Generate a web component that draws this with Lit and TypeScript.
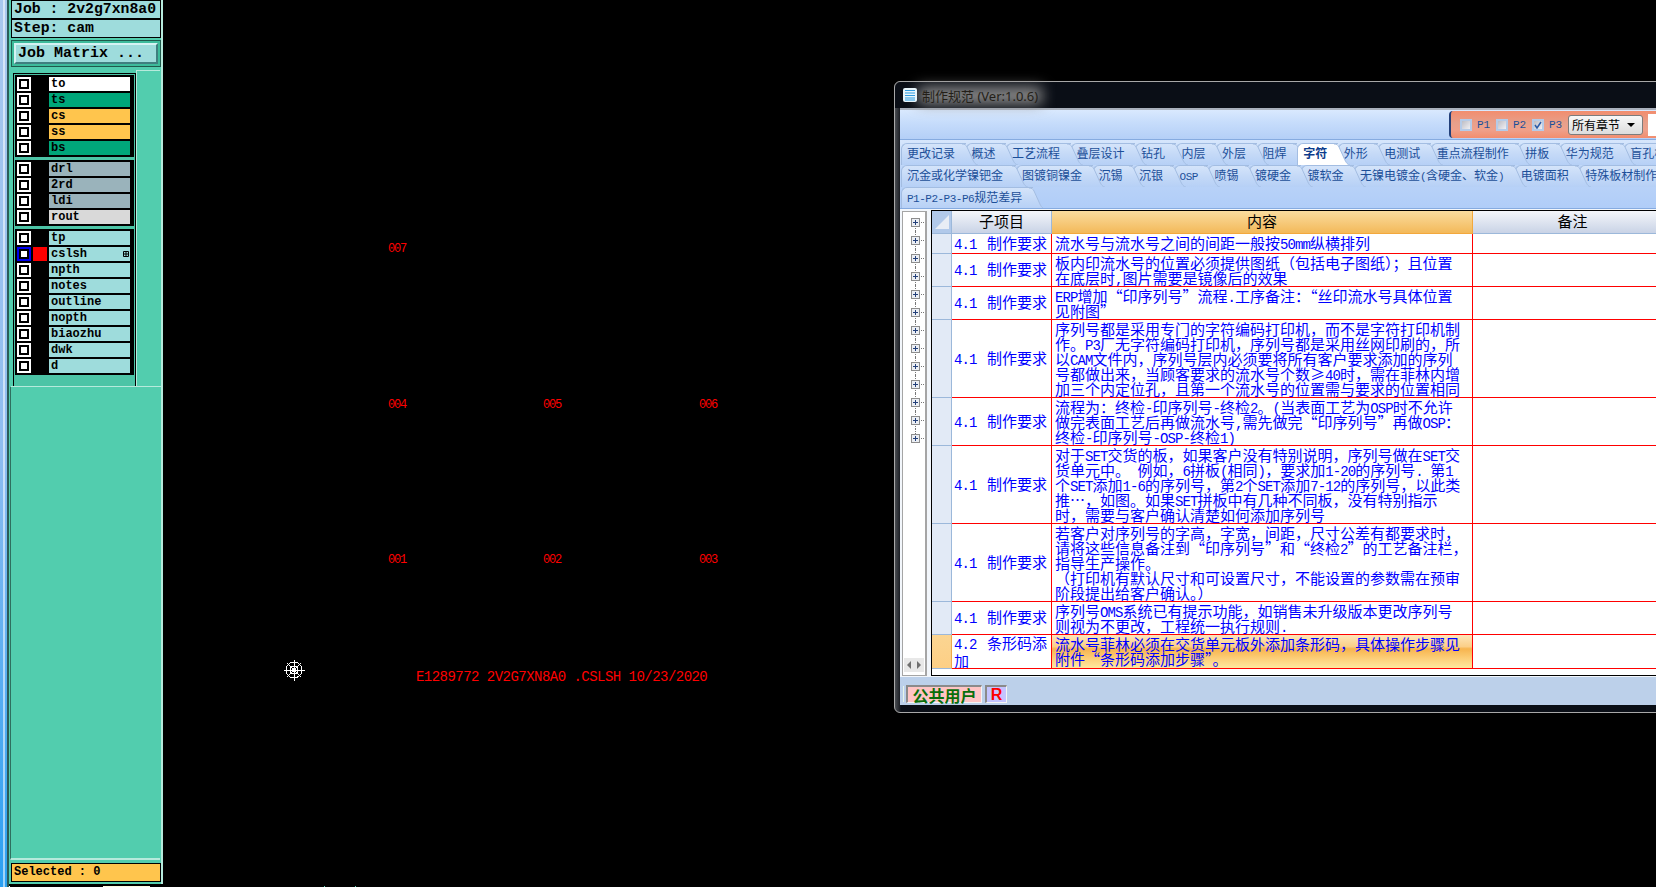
import { LitElement, css, html, svg } from "lit";
import { customElement } from "lit/decorators.js";
import { classMap } from "lit/directives/class-map.js";

interface Layer {
    name: string;
    tone: string;
    check?: boolean;
    mark?: boolean;
}

const LAYER_GROUPS: Layer[][] = [
    [
        { name: "to", tone: "white" },
        { name: "ts", tone: "green" },
        { name: "cs", tone: "orange" },
        { name: "ss", tone: "orange" },
        { name: "bs", tone: "green" },
    ],
    [
        { name: "drl", tone: "slate" },
        { name: "2rd", tone: "slate" },
        { name: "ldi", tone: "slate" },
        { name: "rout", tone: "grey" },
    ],
    [
        { name: "tp", tone: "cyan" },
        { name: "cslsh", tone: "cyan", check: true, mark: true },
        { name: "npth", tone: "cyan" },
        { name: "notes", tone: "cyan" },
        { name: "outline", tone: "cyan" },
        { name: "nopth", tone: "cyan" },
        { name: "biaozhu", tone: "cyan" },
        { name: "dwk", tone: "cyan" },
        { name: "d", tone: "cyan" },
    ],
];

const CANVAS_LABELS = [
    { text: "007", x: 225, y: 243 },
    { text: "004", x: 225, y: 399 },
    { text: "005", x: 380, y: 399 },
    { text: "006", x: 536, y: 399 },
    { text: "001", x: 225, y: 554 },
    { text: "002", x: 380, y: 554 },
    { text: "003", x: 536, y: 554 },
];

const TAB_ROWS: string[][] = [
    ["更改记录", "概述", "工艺流程", "叠层设计", "钻孔", "内层", "外层", "阻焊", "字符", "外形", "电测试", "重点流程制作", "拼板", "华为规范", "盲孔板"],
    ["沉金或化学镍钯金", "图镀铜镍金", "沉锡", "沉银", "OSP", "喷锡", "镀硬金", "镀软金", "无镍电镀金(含硬金、软金)", "电镀面积", "特殊板材制作"],
    ["P1-P2-P3-P6规范差异"],
];

const RULES: { item: string[]; lines: string[]; picked?: boolean }[] = [
    { item: ["4.1 制作要求"], lines: ["流水号与流水号之间的间距一般按50mm纵横排列"] },
    { item: ["4.1 制作要求"], lines: ["板内印流水号的位置必须提供图纸（包括电子图纸）；且位置", "在底层时,图片需要是镜像后的效果"] },
    { item: ["4.1 制作要求"], lines: ["ERP增加“印序列号”流程.工序备注：“丝印流水号具体位置", "见附图”"] },
    {
        item: ["4.1 制作要求"],
        lines: [
            "序列号都是采用专门的字符编码打印机，而不是字符打印机制",
            "作。P3厂无字符编码打印机，序列号都是采用丝网印刷的，所",
            "以CAM文件内，序列号层内必须要将所有客户要求添加的序列",
            "号都做出来，当顾客要求的流水号个数≥40时，需在菲林内增",
            "加三个内定位孔，且第一个流水号的位置需与要求的位置相同",
        ],
    },
    {
        item: ["4.1 制作要求"],
        lines: [
            "流程为：终检-印序列号-终检2。(当表面工艺为OSP时不允许",
            "做完表面工艺后再做流水号,需先做完“印序列号”再做OSP：",
            "终检-印序列号-OSP-终检1)",
        ],
    },
    {
        item: ["4.1 制作要求"],
        lines: [
            "对于SET交货的板，如果客户没有特别说明，序列号做在SET交",
            "货单元中。 例如，6拼板(相同)，要求加1-20的序列号. 第1",
            "个SET添加1-6的序列号，第2个SET添加7-12的序列号，以此类",
            "推…，如图。如果SET拼板中有几种不同板，没有特别指示",
            "时，需要与客户确认清楚如何添加序列号",
        ],
    },
    {
        item: ["4.1 制作要求"],
        lines: [
            "若客户对序列号的字高，字宽，间距，尺寸公差有都要求时，",
            "请将这些信息备注到“印序列号”和“终检2”的工艺备注栏，",
            "指导生产操作。",
            "（打印机有默认尺寸和可设置尺寸，不能设置的参数需在预审",
            "阶段提出给客户确认。）",
        ],
    },
    { item: ["4.1 制作要求"], lines: ["序列号OMS系统已有提示功能，如销售未升级版本更改序列号", "则视为不更改，工程统一执行规则."] },
    { item: ["4.2 条形码添", "加"], lines: ["流水号菲林必须在交货单元板外添加条形码，具体操作步骤见", "附件“条形码添加步骤”。"], picked: true },
];

const TREE_NODES = 13;

/** Latin runs are half width in the old bitmap font, so they get their own size. */
function mixed(text: string) {
    return text.split(/([\x20-\x7e]+)/).map((part, i) => (i % 2 ? html`<span class="lat">${part}</span>` : part));
}

@customElement("app-root")
export class AppRoot extends LitElement {
    static styles = css`
        :host {
            display: block;
            position: relative;
            width: 100vw;
            height: 100vh;
            overflow: hidden;
            background: #000;
            font-family: "Liberation Mono", monospace;
        }
        .desk {
            display: flex;
            height: 100%;
        }

        /* left edge of the other window */
        .edge {
            width: 9px;
            flex-shrink: 0;
            background:
                linear-gradient(90deg, transparent 0 3px, rgba(255, 255, 255, 0.55) 3px 5px, transparent 5px 7px, #2b5c58 7px 9px),
                linear-gradient(180deg, #a9c8ee 0%, #8fbdf0 50%, #2ba0f2 100%);
        }

        /* layer panel */
        .side {
            width: 154px;
            height: 884px;
            flex-shrink: 0;
            box-sizing: border-box;
            display: flex;
            flex-direction: column;
            padding-left: 2px;
            background: #52cdae;
            border-right: 2px solid #b6eadc;
            font-weight: 700;
            color: #000;
        }
        .info {
            height: 19px;
            width: 150px;
            box-sizing: border-box;
            border: 1px solid #000;
            background: #9edcdc;
            font-size: 14.8px;
            line-height: 17px;
            padding-left: 2px;
            white-space: pre;
            overflow: hidden;
        }
        .matrix {
            margin-top: 2px;
            width: 150px;
            height: 27px;
            box-sizing: border-box;
            border: 1px solid #1f5a4c;
            background: #3dbb9b;
            padding: 2px;
        }
        .matrix div {
            height: 21px;
            width: 144px;
            box-sizing: border-box;
            border: 2px solid;
            border-color: #d5f3f3 #3f7f7f #3f7f7f #d5f3f3;
            background: #9edcdc;
            font-size: 15px;
            line-height: 17px;
            padding-left: 2px;
            white-space: pre;
        }
        .mid {
            display: flex;
            margin-top: 3px;
            height: 317px;
            box-sizing: border-box;
            border-bottom: 1px solid #b6eadc;
        }
        .frame {
            width: 123px;
            height: 313px;
            margin: 3px 0 0 2px;
            box-sizing: border-box;
            border: 1px solid #000;
            border-bottom: 0;
            background: #4cc4a6;
            display: flex;
            flex-direction: column;
            gap: 3px;
            padding: 1px;
        }
        .mid-fill {
            flex: 1;
            border-left: 1px solid #b6eadc;
            border-top: 1px solid #b6eadc;
            margin-right: 1px;
        }
        .group {
            background: #000;
            padding: 2px 2px 0;
            display: flex;
            flex-direction: column;
        }
        .layer {
            display: flex;
            height: 16px;
        }
        .check {
            width: 14px;
            height: 14px;
            box-sizing: border-box;
            border: 2px solid #fff;
            background: #000;
            padding: 2px;
        }
        .check::before {
            content: "";
            display: block;
            width: 6px;
            height: 6px;
            background: #fff;
        }
        .check.on {
            border-color: #0000f0;
        }
        .swatch {
            width: 14px;
            height: 14px;
            margin: 0 2px;
        }
        .swatch.on {
            background: #f00;
        }
        .name {
            width: 81px;
            height: 14px;
            box-sizing: border-box;
            padding-left: 2px;
            font-size: 12px;
            line-height: 14px;
            display: flex;
            justify-content: space-between;
            align-items: center;
        }
        .name svg {
            margin-right: 1px;
        }
        .white {
            background: #fff;
        }
        .green {
            background: #00a67a;
        }
        .orange {
            background: #ffc54d;
        }
        .slate {
            background: #9ab3bb;
        }
        .grey {
            background: #d9d9d9;
        }
        .cyan {
            background: #9edcdc;
        }
        .rest {
            flex: 1;
            margin-left: -1px;
            margin-right: 1px;
            border-left: 1px solid #2f6f5f;
            border-bottom: 2px solid #b6eadc;
        }
        .selected {
            margin-top: 3px;
            margin-bottom: 2px;
            width: 150px;
            height: 19px;
            box-sizing: border-box;
            border: 1px solid #000;
            background: #ffc54d;
            font-size: 12px;
            line-height: 17px;
            padding-left: 2px;
            white-space: pre;
        }

        /* board canvas */
        .canvas {
            flex: 1;
            position: relative;
            color: #f00;
        }
        .label {
            position: absolute;
            font-size: 12px;
            line-height: 12px;
            letter-spacing: -1.2px;
        }
        .stamp {
            position: absolute;
            left: 253px;
            top: 669px;
            font-size: 14px;
            line-height: 16px;
            letter-spacing: -0.53px;
            white-space: pre;
        }
        .datum {
            position: absolute;
            left: 119px;
            top: 658px;
        }
        .crumb {
            position: absolute;
            top: 886px;
            height: 1px;
        }

        /* spec window */
        .win {
            position: absolute;
            left: 894px;
            top: 81px;
            width: 800px;
            height: 632px;
            box-sizing: border-box;
            display: flex;
            flex-direction: column;
            border: 1px solid #a8a8a8;
            border-radius: 6px 0 0 6px;
            background: linear-gradient(90deg, #4a4d52 0, #25282e 4px, #0a0e16 6px);
            font-family: "Noto Sans CJK SC", sans-serif;
        }
        .title {
            height: 26px;
            flex-shrink: 0;
            display: flex;
            align-items: center;
            gap: 5px;
            padding-left: 8px;
            background: #0a0e16;
            border-radius: 6px 0 0 0;
            font: 13px "Noto Sans", "Noto Sans CJK SC", sans-serif;
            color: #241f18;
            isolation: isolate;
        }
        .title span {
            position: relative;
        }
        .title span::before {
            content: "";
            position: absolute;
            inset: 1px -4px;
            z-index: -1;
            background: #8e8e8e;
            filter: blur(7px);
        }
        .client {
            flex: 1;
            min-height: 0;
            margin-left: 5px;
            margin-bottom: 7px;
            border-top: 2px solid #a9b0bc;
            display: flex;
            flex-direction: column;
            background: #f2f6fb;
        }
        .bar {
            height: 29px;
            flex-shrink: 0;
            box-sizing: content-box;
            display: flex;
            align-items: flex-start;
            background: linear-gradient(180deg, #d9e9fe 0%, #c6dcfb 45%, #b4cff7 100%);
            border-bottom: 1px solid #86abe0;
        }
        .filter {
            margin: 1px 0 0 549px;
            width: 260px;
            flex-shrink: 0;
            height: 27px;
            box-sizing: border-box;
            display: flex;
            align-items: center;
            border-left: 2px solid #23407a;
            border-radius: 4px 0 0 4px;
            background: linear-gradient(180deg, #f28d6e 0%, #e7a08b 45%, #efa08a 70%, #f28d6e 100%);
            padding-left: 9px;
            font: 10px "Liberation Mono", monospace;
            color: #1c4f99;
        }
        .pick {
            width: 12px;
            height: 12px;
            flex-shrink: 0;
            box-sizing: border-box;
            border: 2px solid #b5cbe8;
            background: linear-gradient(135deg, #bdbdc4, #f0f0f4);
            margin-right: 5px;
            display: flex;
        }
        .pick + span {
            margin-right: 6px;
            font-size: 11px;
            width: 13px;
            flex-shrink: 0;
        }
        .combo {
            width: 75px;
            height: 20px;
            flex-shrink: 0;
            box-sizing: border-box;
            display: flex;
            justify-content: space-between;
            align-items: center;
            padding: 0 7px 0 3px;
            border: 1px solid #7c7c7c;
            border-radius: 3px;
            background: linear-gradient(180deg, #f8f8f8, #dcdcdc);
            font: 12px "Noto Sans CJK SC", sans-serif;
            color: #000;
            white-space: nowrap;
        }
        .combo i {
            border: 4px solid transparent;
            border-top: 4px solid #000;
            border-bottom: 0;
        }
        .find {
            width: 60px;
            height: 22px;
            margin-left: 5px;
            flex-shrink: 0;
            background: #fff;
        }
        .strip {
            height: 69px;
            flex-shrink: 0;
            box-sizing: border-box;
            padding: 3px 0 0 1px;
            background: linear-gradient(180deg, #d6e6fc 0%, #bfd6f8 40%, #b0cdf8 100%);
            border-bottom: 1px solid #86abe0;
            overflow: hidden;
        }
        .tabs {
            display: flex;
            height: 22px;
            white-space: nowrap;
        }
        .tab {
            position: relative;
            flex-shrink: 0;
            box-sizing: border-box;
            height: 22px;
            padding: 0 10.5px 0 5px;
            font-size: 12px;
            line-height: 18px;
            color: #1c4f99;
            background: linear-gradient(180deg, #d4e4fa 0%, #c4d9f7 50%, #b6d0f6 100%);
            border-left: 1px solid #a3bde2;
            border-top: 1px solid #a3bde2;
            border-top-left-radius: 6px;
        }
        .tabs.second .tab:first-child {
            padding-right: 13px;
        }
        .tab.on {
            background: #fff;
            font-weight: 700;
            color: #0c3c8c;
        }
        .tab svg {
            position: absolute;
            left: 100%;
            top: -1px;
            margin-left: -4px;
        }
        .tab .lat {
            font: 11px "Liberation Mono", monospace;
            letter-spacing: -0.5px;
        }
        .main {
            flex: 1;
            min-height: 0;
            display: flex;
            margin-top: 1px;
        }
        .tree {
            width: 25px;
            height: 465px;
            margin: 1px 0 0 2px;
            box-sizing: border-box;
            flex-shrink: 0;
            border: 1px solid #a5a5a5;
            border-right-width: 2px;
            background: #fff;
            display: flex;
            flex-direction: column;
            padding-top: 1px;
        }
        .node {
            position: relative;
            height: 18px;
            padding: 0 0 0 8px;
            display: flex;
            align-items: center;
            gap: 1px;
            flex-shrink: 0;
        }
        .node::before {
            content: "";
            position: absolute;
            left: 12px;
            top: 0;
            bottom: 0;
            border-left: 1px dotted #777;
        }
        .node:first-child::before {
            top: 9px;
        }
        .node:nth-child(13)::before {
            bottom: 9px;
        }
        .node svg {
            position: relative;
        }
        .node i {
            width: 3px;
            border-top: 1px dotted #777;
        }
        .tree-scroll {
            margin: auto 1px 3px;
            height: 14px;
            display: flex;
            justify-content: space-around;
            align-items: center;
            background: #e8e8e8;
        }
        .tree-scroll i {
            border: 4px solid transparent;
            border-left: 0;
            border-right: 4px solid #707070;
        }
        .tree-scroll i + i {
            border-right: 0;
            border-left: 4px solid #707070;
        }
        .grid {
            margin-left: 4px;
            flex: 1;
            height: 466px;
            box-sizing: border-box;
            border: 1px solid #000;
            border-right: 0;
            background: #fff;
            overflow: hidden;
        }
        .row {
            display: grid;
            grid-template-columns: 20px 100px 421px 200px;
        }
        .head {
            height: 23px;
            font-size: 15px;
            line-height: 20px;
            color: #000;
            text-align: center;
        }
        .head div {
            background: linear-gradient(180deg, #f4f6fa 0%, #c9d3e6 100%);
            border-bottom: 1px solid #9cb8da;
            border-right: 1px solid #9cb8da;
        }
        .head .corner {
            background: #b1c9ea;
            display: flex;
            align-items: center;
            justify-content: center;
        }
        .head .picked {
            background: linear-gradient(180deg, #fadc9e 0%, #f3b95a 100%);
            border-bottom-color: #f3a83c;
            border-right-color: #f3a83c;
        }
        .row-no {
            background: #e2eaf6;
            border-right: 1px solid #9cb8da;
            border-bottom: 1px solid #9cb8da;
        }
        .row-no.picked {
            background: linear-gradient(180deg, #fbd592, #fdcf85);
            border-right-color: #f0a848;
        }
        .cell {
            border-right: 1px solid #f00;
            border-bottom: 1px solid #f00;
            color: #0000ff;
            font-size: 15px;
            line-height: 15px;
            overflow: hidden;
        }
        .cell div {
            white-space: pre;
        }
        .cell .lat {
            font: 14px "Liberation Mono", monospace;
            letter-spacing: -0.9px;
        }
        .item {
            display: flex;
            flex-direction: column;
            justify-content: center;
            padding-left: 2px;
        }
        .item .lat {
            padding-right: 3px;
        }
        .body {
            padding: 1px 0 1px 3px;
        }
        .body div {
            height: 15px;
        }
        .row.first .body,
        .row.first .item {
            min-height: 20px;
            box-sizing: border-box;
        }
        .body.picked {
            background: linear-gradient(180deg, #fde6ba 0%, #fbcf88 35%, #f7b44e 42%, #fdd27e 75%, #fee89f 100%);
        }
        .note {
            border-bottom: 1px solid #f00;
        }
        .status {
            height: 28px;
            flex-shrink: 0;
            box-sizing: border-box;
            background: #bcd0ea;
            display: flex;
            align-items: flex-start;
            padding: 8px 0 0 4px;
        }
        .who,
        .role {
            height: 18px;
            box-sizing: border-box;
            border: 1px solid #f5f5f5;
            border-top: 2px solid #8a8a8a;
            border-left: 2px solid #8a8a8a;
            line-height: 16px;
            text-align: center;
        }
        .who {
            width: 76px;
            margin-left: 2px;
            background: #ffc4c4;
            color: #0a6e0a;
            font-size: 16px;
            font-weight: 700;
            box-shadow: -3px 0 0 -1px #bcd0ea, -4px 0 0 -1px #e8f5e8;
        }
        .role {
            width: 22px;
            margin-left: 3px;
            background: #c4c4ff;
            color: #f00;
            font: 700 16px "Liberation Sans", sans-serif;
            line-height: 15px;
        }
    `;

    private renderLayer(layer: Layer) {
        return html`
            <div class="layer">
                <div class=${classMap({ check: true, on: !!layer.check })}></div>
                <div class=${classMap({ swatch: true, on: !!layer.mark })}></div>
                <div class="name ${layer.tone}">
                    <span>${layer.name}</span>
                    ${layer.mark
                        ? html`<svg width="6" height="6" viewBox="0 0 6 6"><path d="M.5.5h5v5h-5zM3 .5v5M.5 3h5" fill="none" stroke="#000" stroke-width="1" /></svg>`
                        : ""}
                </div>
            </div>
        `;
    }

    // earlier tabs lie over later ones, their slanted tails cover the next tab's corner
    private renderTab(label: string, index: number, count: number) {
        const active = label === "字符";
        const fill = active ? "#fff" : "url(#tabfill)";
        return html`
            <div class=${classMap({ tab: true, on: active })} style="z-index:${active ? count + 1 : count - index}">
                ${mixed(label)}
                <svg width="16" height="22" viewBox="0 0 16 22">
                    <path d="M0 1C3 1 4 2 5 4L10 15C12 20 14 22 16 22H0Z" fill=${fill} />
                    <path d="M0 1C3 1 4 2 5 4L10 15C12 20 14 22 16 22" fill="none" stroke="#a3bde2" />
                </svg>
            </div>
        `;
    }

    private renderDatum() {
        return html`
            <svg class="datum" width="24" height="24" viewBox="0 0 24 24" fill="none" stroke="#fff" stroke-width="1" shape-rendering="crispEdges">
                ${svg`<path d="M12 1.5v21M1.5 12h21M5 5l14 14M19 5L5 19" />
                <circle cx="12" cy="12" r="8" />
                <circle cx="12" cy="12" r="4" />
                <circle cx="12" cy="12" r="1.5" fill="#fff" />`}
            </svg>
        `;
    }

    private renderTree() {
        const nodes = Array.from({ length: TREE_NODES });
        return html`
            <div class="tree">
                ${nodes.map(
                    () => html`
                        <div class="node">
                            <svg width="9" height="9" viewBox="0 0 9 9">
                                <rect x=".5" y=".5" width="8" height="8" fill="#eceff4" stroke="#8d8d8d" />
                                <path d="M2 4.5h5M4.5 2v5" stroke="#23407a" />
                            </svg>
                            <i></i>
                        </div>
                    `,
                )}
                <div class="tree-scroll"><i></i><i></i></div>
            </div>
        `;
    }

    private renderWindow() {
        return html`
            <section class="win">
                <svg width="0" height="0" style="position:absolute">
                    <defs>
                        <linearGradient id="tabfill" x1="0" y1="0" x2="0" y2="1">
                            <stop offset="0" stop-color="#d4e4fa" />
                            <stop offset=".5" stop-color="#c4d9f7" />
                            <stop offset="1" stop-color="#b6d0f6" />
                        </linearGradient>
                    </defs>
                </svg>
                <header class="title">
                    <svg width="14" height="14" viewBox="0 0 14 14">
                        <rect width="14" height="14" rx="2" fill="#e9f6fc" />
                        <path d="M2 2.5h10M2 5h10M2 7.500h10M2 10h10M2 12h10" stroke="#2f9be0" stroke-width="1.200" />
                    </svg>
                    <span>制作规范 (Ver:1.0.6)</span>
                </header>
                <div class="client">
                    <div class="bar">
                        <div class="filter">
                            <div class="pick"></div><span>P1</span>
                            <div class="pick"></div><span>P2</span>
                            <div class="pick">
                                <svg width="8" height="8" viewBox="0 0 8 8"><path d="M1 4l2 3 4-6" fill="none" stroke="#2a5ba8" stroke-width="1.500" /></svg>
                            </div><span>P3</span>
                            <div class="combo"><span>所有章节</span><i></i></div>
                            <div class="find"></div>
                        </div>
                    </div>
                    <div class="strip">
                        ${TAB_ROWS.map(
                            (row, i) => html`<div class=${classMap({ tabs: true, second: i === 1 })}>${row.map((label, n) => this.renderTab(label, n, row.length))}</div>`,
                        )}
                    </div>
                    <div class="main">
                        ${this.renderTree()}
                        <div class="grid">
                            <div class="row head">
                                <div class="corner">
                                    <svg width="16" height="16" viewBox="0 0 16 16"><path d="M15 1V15H1Z" fill="#e8edf5" /></svg>
                                </div>
                                <div>子项目</div>
                                <div class="picked">内容</div>
                                <div>备注</div>
                            </div>
                            ${RULES.map(
                                (rule, i) => html`
                                    <div class=${classMap({ row: true, first: i === 0 })}>
                                        <div class=${classMap({ "row-no": true, picked: !!rule.picked })}></div>
                                        <div class="cell item">${rule.item.map((line) => html`<div>${mixed(line)}</div>`)}</div>
                                        <div class=${classMap({ cell: true, body: true, picked: !!rule.picked })}>
                                            ${rule.lines.map((line) => html`<div>${mixed(line)}</div>`)}
                                        </div>
                                        <div class="note"></div>
                                    </div>
                                `,
                            )}
                        </div>
                    </div>
                    <div class="status">
                        <div class="who">公共用户</div>
                        <div class="role">R</div>
                    </div>
                </div>
            </section>
        `;
    }

    render() {
        return html`
            <div class="desk">
                <div class="edge"></div>
                <aside class="side">
                    <div class="info">Job : 2v2g7xn8a0</div>
                    <div class="info">Step: cam</div>
                    <div class="matrix"><div>Job Matrix ...</div></div>
                    <div class="mid">
                        <div class="frame">
                            ${LAYER_GROUPS.map((group) => html`<div class="group">${group.map((layer) => this.renderLayer(layer))}</div>`)}
                        </div>
                        <div class="mid-fill"></div>
                    </div>
                    <div class="rest"></div>
                    <div class="selected">Selected : 0</div>
                </aside>
                <main class="canvas">
                    ${CANVAS_LABELS.map((label) => html`<span class="label" style="left:${label.x}px;top:${label.y}px">${label.text}</span>`)}
                    <span class="stamp">E1289772 2V2G7XN8A0 .CSLSH 10/23/2020</span>
                    ${this.renderDatum()}
                </main>
            </div>
            <i class="crumb" style="left:9px;width:1px;background:#fff"></i>
            <i class="crumb" style="left:103px;width:47px;background:#fffde0"></i>
            <i class="crumb" style="left:324px;width:1px;background:#52cdae"></i>
            <i class="crumb" style="left:355px;width:1px;background:#52cdae"></i>
            ${this.renderWindow()}
        `;
    }
}
